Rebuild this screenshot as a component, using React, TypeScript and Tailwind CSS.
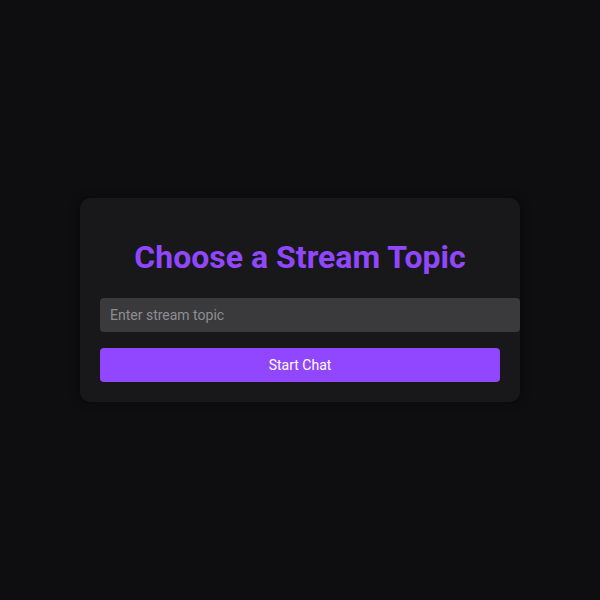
export default function App() {
    return (
        <div className="flex h-[600px] w-full items-center justify-center bg-[#0e0e10] font-['Roboto',sans-serif]">
            <div className="w-[440px] rounded-[10px] bg-[#18181b] p-5 shadow-[0_0_10px_rgba(0,0,0,0.5)]">
                <h2 className="my-[21.44px] text-center text-[32px] font-bold leading-[37.5px] text-[#9147ff]">
                    Choose a Stream Topic
                </h2>
                <input
                    type="text"
                    placeholder="Enter stream topic"
                    className="block h-[34px] w-[calc(100%+20px)] rounded-[4px] bg-[#3a3a3d] px-[10px] text-sm text-white placeholder:text-[#8e8e92] focus:outline-none"
                />
                <button className="mt-4 block h-[34px] w-full rounded-[4px] bg-[#9147ff] text-sm text-white">
                    Start Chat
                </button>
            </div>
        </div>
    );
}
